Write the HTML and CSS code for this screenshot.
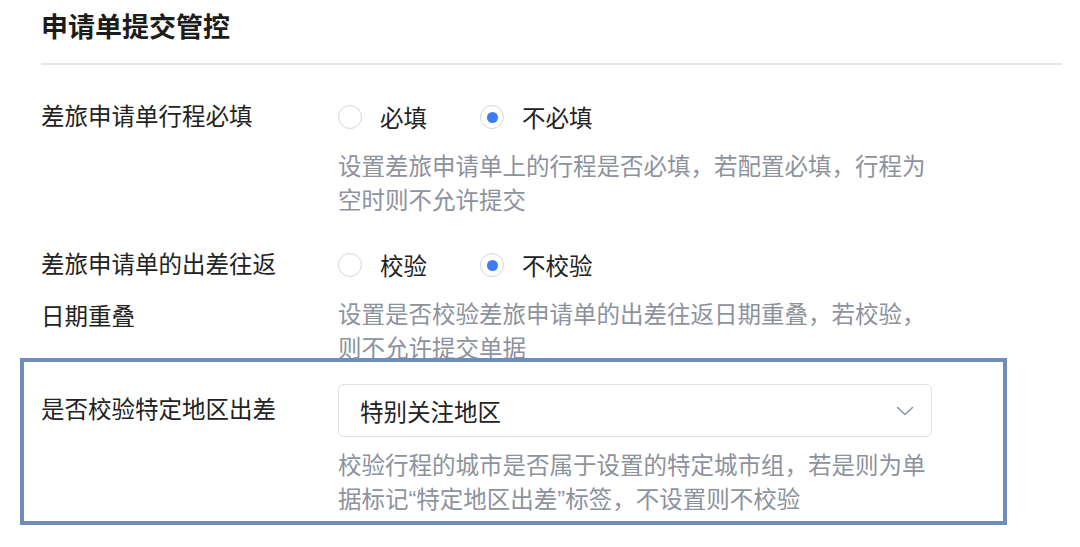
FILE: index.html
```html
<!DOCTYPE html>
<html lang="zh-CN">
<head>
<meta charset="utf-8">
<title>申请单提交管控</title>
<link rel="stylesheet" href="styles.css">
</head>
<body>
<div class="page">
  <div class="section-head">
    <h2 class="section-title">申请单提交管控</h2>
  </div>

  <div class="form-row">
    <div class="form-label">差旅申请单行程必填</div>
    <div class="form-control">
      <div class="radio-group">
        <label class="radio"><span class="radio-circle"></span><span class="radio-text">必填</span></label>
        <label class="radio"><span class="radio-circle is-checked"></span><span class="radio-text">不必填</span></label>
      </div>
      <p class="form-help">设置差旅申请单上的行程是否必填，若配置必填，行程为空时则不允许提交</p>
    </div>
  </div>

  <div class="form-row">
    <div class="form-label">差旅申请单的出差往返日期重叠</div>
    <div class="form-control">
      <div class="radio-group">
        <label class="radio"><span class="radio-circle"></span><span class="radio-text">校验</span></label>
        <label class="radio"><span class="radio-circle is-checked"></span><span class="radio-text">不校验</span></label>
      </div>
      <p class="form-help">设置是否校验差旅申请单的出差往返日期重叠，若校验，则不允许提交单据</p>
    </div>
  </div>

  <div class="form-row form-row--highlight">
    <div class="form-label form-label--select">是否校验特定地区出差</div>
    <div class="form-control">
      <div class="select">
        <span class="select-value">特别关注地区</span>
        <svg class="select-arrow" width="18" height="10" viewBox="0 0 18 10" aria-hidden="true">
          <path d="M1.5 1.5 L9 8.5 L16.5 1.5" fill="none" stroke="#8c93a8" stroke-width="1.6" stroke-linecap="round" stroke-linejoin="round"/>
        </svg>
      </div>
      <p class="form-help form-help--select">校验行程的城市是否属于设置的特定城市组，若是则为单据标记“特定地区出差”标签，不设置则不校验</p>
    </div>
  </div>
</div>
</body>
</html>
```

FILE: styles.css
```css
* {
  box-sizing: border-box;
}

html, body {
  margin: 0;
  padding: 0;
  background: #ffffff;
}

body {
  font-family: "Liberation Sans", "Noto Sans CJK SC", sans-serif;
  font-size: 23.5px;
  color: #262626;
}

.page {
  padding: 0 18px 0 41px;
}

.section-head {
  padding-top: 10px;
  padding-bottom: 17px;
  border-bottom: 2px solid #e6e6e6;
}

.section-title {
  margin: 0;
  font-size: 27px;
  line-height: 36px;
  font-weight: 600;
  color: #1c1c1c;
}

.form-row {
  display: grid;
  grid-template-columns: 297px 594px;
  margin-top: 26px;
}

.form-row + .form-row {
  margin-top: 21px;
}

.form-label {
  width: 245px;
  line-height: 52px;
  color: #222222;
}

.form-control {
  min-width: 0;
}

.radio-group {
  display: flex;
  align-items: center;
  gap: 53px;
  height: 52px;
}

.radio {
  display: flex;
  align-items: center;
  gap: 18px;
}

.radio-circle {
  width: 24px;
  height: 24px;
  border: 1.5px solid #d3d7e1;
  border-radius: 50%;
  display: flex;
  align-items: center;
  justify-content: center;
  background: #fff;
}

.radio-circle.is-checked::after {
  content: "";
  width: 11px;
  height: 11px;
  border-radius: 50%;
  background: #3b7cf2;
}

.radio-text {
  color: #222222;
}

.form-help {
  margin: 7px 0 0;
  line-height: 34px;
  color: #8d929d;
}

.form-row--highlight {
  position: relative;
  z-index: 1;
  margin-left: -21px;
  margin-right: 55px;
  padding: 22px 0 4px 17px;
  border: 4px solid #6e8db9;
  background: #ffffff;
}

.form-row + .form-row--highlight {
  margin-top: -8px;
}

.form-label--select {
  line-height: 53px;
}

.select {
  display: flex;
  align-items: center;
  justify-content: space-between;
  height: 53px;
  padding: 0 17px 0 21px;
  border: 1px solid #dcdfe6;
  border-radius: 6px;
  background: #fff;
}

.select-value {
  color: #222222;
}

.select-arrow {
  display: block;
}

.form-help--select {
  margin-top: 12px;
}
```
